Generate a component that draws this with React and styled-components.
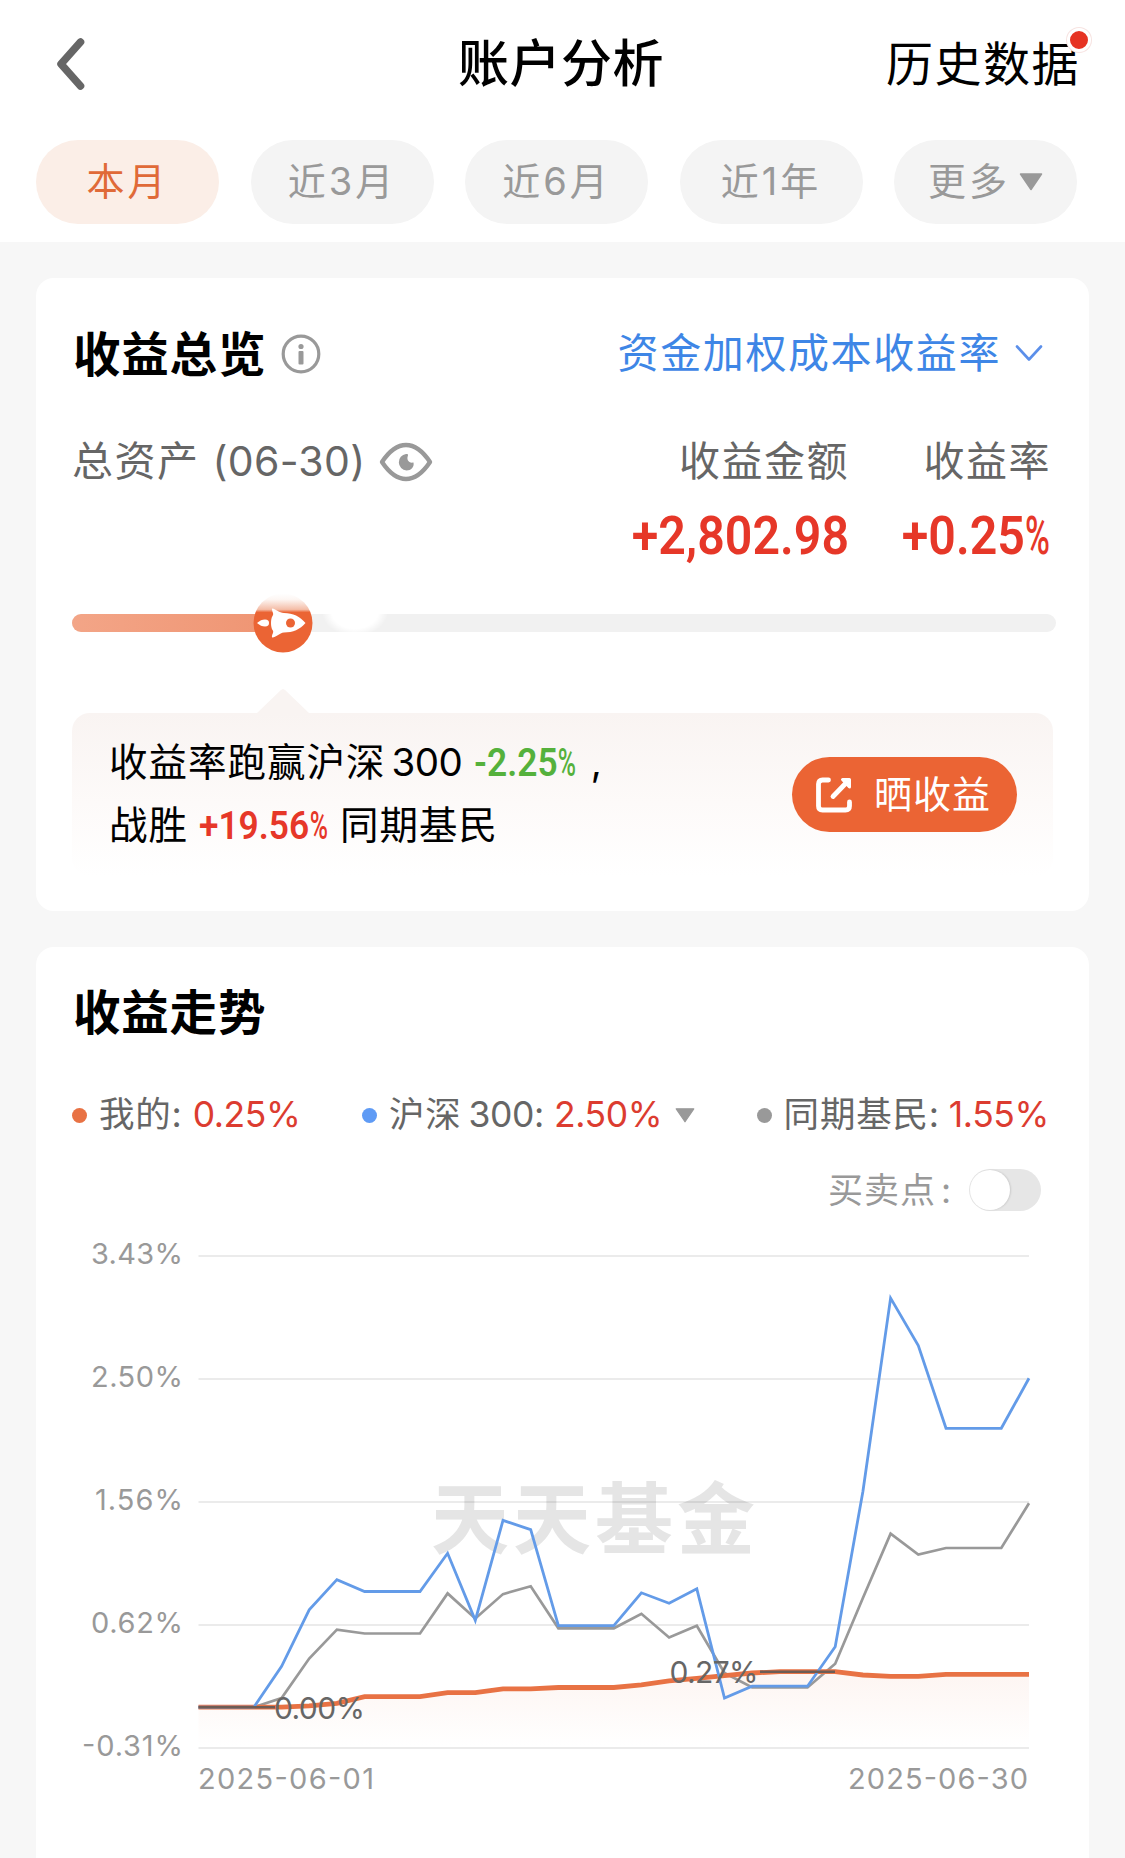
import React from 'react'
import styled, { createGlobalStyle, css } from 'styled-components';

const periods = ['本月', '近3月', '近6月', '近1年'];

const mine = [0, 0, 0, 0, 0.01, 0.03, 0.08, 0.08, 0.08, 0.11, 0.11, 0.14, 0.14, 0.15, 0.15, 0.15, 0.17, 0.2, 0.22, 0.24, 0.26, 0.27, 0.27, 0.27, 0.245, 0.235, 0.235, 0.25, 0.25, 0.25, 0.25];
const hs300 = [0, 0, 0, 0.31, 0.74, 0.97, 0.88, 0.88, 0.88, 1.17, 0.66, 1.42, 1.35, 0.62, 0.62, 0.62, 0.87, 0.79, 0.9, 0.07, 0.16, 0.16, 0.16, 0.46, 1.64, 3.11, 2.75, 2.12, 2.12, 2.12, 2.5];
const peers = [0, 0, 0, 0.07, 0.37, 0.59, 0.56, 0.56, 0.56, 0.865, 0.675, 0.86, 0.92, 0.6, 0.6, 0.6, 0.71, 0.53, 0.62, 0.26, 0.15, 0.15, 0.15, 0.33, 0.83, 1.32, 1.16, 1.21, 1.21, 1.21, 1.55];

const ticks = [
    { label: '3.43%', width: 92 },
    { label: '2.50%', width: 92 },
    { label: '1.56%', width: 88 },
    { label: '0.62%', width: 92 },
    { label: '-0.31%', width: 101 },
];

const LEFT = 126.5;
const RIGHT = 957;
const TOP = 25;
const STEP = 123;
const px = (i) => LEFT + (i * (RIGHT - LEFT)) / 30;
const py = (v) => TOP + (3.43 - v) * 131.55;
const points = (data) => data.map((v, i) => `${px(i).toFixed(1)},${py(v).toFixed(1)}`).join(' ');

const BackIcon = () => (
    <svg width="30" height="54" viewBox="0 0 30 54" fill="none">
        <path d="M24.500 5L5 27L24.500 49" stroke="#666" strokeWidth="7.600" strokeLinecap="round" strokeLinejoin="round" />
    </svg>
)

const InfoIcon = () => (
    <svg width="40" height="40" viewBox="0 0 40 40">
        <circle cx="20" cy="20" r="17.800" fill="none" stroke="#999" strokeWidth="3.200" />
        <circle cx="20" cy="12.500" r="2.600" fill="#999" />
        <rect x="17.500" y="17" width="5" height="13.500" rx="1" fill="#999" />
    </svg>
)

const EyeIcon = () => (
    <svg width="54" height="40" viewBox="0 0 54 40">
        <path d="M3 20C11 8 18 3 27 3S43 8 51 20C43 32 36 37 27 37S11 32 3 20Z" fill="none" stroke="#999" strokeWidth="4.400" strokeLinejoin="round" />
        <path d="M27 12C29 12 29.500 12.500 28.800 14C27.500 17.500 29.500 21.500 34.500 20.500C35.500 25 32 28.500 27.500 28.500A8.300 8.300 0 0 1 27 12Z" fill="#999" />
    </svg>
)

const RocketIcon = () => (
    <svg width="60" height="60" viewBox="0 0 60 60">
        <defs>
            <linearGradient id="rocketFade" x1="0" y1="0" x2="0" y2="1">
                <stop offset="0" stopColor="#fff" />
                <stop offset="0.1" stopColor="#fdf6f3" />
                <stop offset="0.27" stopColor="#f4bda7" />
                <stop offset="0.32" stopColor="#eb6434" />
                <stop offset="1" stopColor="#eb6434" />
            </linearGradient>
        </defs>
        <circle cx="30" cy="30" r="29.500" fill="url(#rocketFade)" />
        <path d="M19 15.500C23.500 16 26 20 31 20C40 20 47 23.500 52.500 30C47 36.500 40 39.500 31 39.500C26 40 24.500 44 19 44.500C18.500 41.500 21.500 39 19.500 37C17.500 34.500 17.500 25.500 19.500 23C21.500 20.500 18.500 18.500 19 15.500Z" fill="#fff" />
        <path d="M4 30C7 27.500 9 26.500 12 26.500C15 26.500 16 28 16 30S15 33.500 12 33.500C9 33.500 7 32.500 4 30Z" fill="#fff" />
        <circle cx="37.500" cy="30" r="4.500" fill="#eb6434" />
    </svg>
)

const ShareIcon = () => (
    <svg width="36" height="36" viewBox="0 0 36 36" fill="none" stroke="#fff" strokeWidth="4.800" strokeLinecap="round" strokeLinejoin="round">
        <path d="M12.500 3H6.500Q2.500 3 2.500 7V29Q2.500 33 6.500 33H29.500Q33.500 33 33.500 29V25" />
        <path d="M17 19.500L31 5" />
        <path d="M26.500 2.500H33.500V10Z" fill="#fff" strokeWidth="3" />
    </svg>
)

const Chevron = () => (
    <svg width="28" height="19" viewBox="0 0 28 19" fill="none">
        <path d="M2 1.500L14 14.500L26 1.500" stroke="#5b8fea" strokeWidth="2.600" strokeLinecap="round" strokeLinejoin="round" />
    </svg>
)

const Triangle = ({ width, height }) => (
    <svg width={width} height={height} viewBox="0 0 24 18">
        <path d="M1.500 1H22.500L12 16.500Z" fill="#999" stroke="#999" strokeWidth="1.500" strokeLinejoin="round" />
    </svg>
)

const TrendChart = () => (
    <ChartSvg width="981" height="600" viewBox="0 0 981 600">
        <defs>
            <linearGradient id="mineArea" x1="0" y1="0" x2="0" y2="1">
                <stop offset="0" stopColor="#fdf5f2" />
                <stop offset="1" stopColor="#fff" />
            </linearGradient>
        </defs>
        <Watermark x="359" y="317" textLength="324">天天基金</Watermark>
        <polygon points={`${LEFT},515 ${points(mine)} ${RIGHT},515`} fill="url(#mineArea)" />
        {ticks.map((tick, i) => (
            <g key={tick.label}>
                <line x1={LEFT} x2={RIGHT} y1={TOP + i * STEP} y2={TOP + i * STEP} stroke="#000" strokeOpacity="0.08" strokeWidth="2" />
                <AxisText x="111" y={TOP + i * STEP + 7.500} textAnchor="end" textLength={tick.width}>{tick.label}</AxisText>
            </g>
        ))}
        <AxisText x="126" y="558" textLength="176">2025-06-01</AxisText>
        <AxisText x="776" y="558" textLength="180">2025-06-30</AxisText>
        <polyline points={points(peers)} fill="none" stroke="#999" strokeWidth="2.700" />
        <polyline points={points(mine)} fill="none" stroke="#e87244" strokeWidth="4.800" />
        <polyline points={points(hs300)} fill="none" stroke="#639be8" strokeWidth="2.800" />
        <line x1={LEFT} x2="203" y1={py(0)} y2={py(0)} stroke="#6e5c54" strokeWidth="2.600" />
        <MarkText x="202" y="487.500" textLength="91">0.00%</MarkText>
        <line x1="688" x2="763" y1={py(0.27)} y2={py(0.27)} stroke="#6e5c54" strokeWidth="2.600" />
        <MarkText x="597.500" y="452" textLength="89">0.27%</MarkText>
    </ChartSvg>
)

const App = () => {
    return (
        <Page>
            <GlobalStyle />
            <Header>
                <TopBar>
                    <BackIcon />
                    <PageTitle>账户分析</PageTitle>
                    <History>历史数据<Badge /></History>
                </TopBar>
                <Tabs>
                    {periods.map((period, i) => (
                        <Tab key={period} $active={i === 0}>{period}</Tab>
                    ))}
                    <Tab>更多<Triangle width={24} height={18} /></Tab>
                </Tabs>
            </Header>

            <OverviewCard>
                <TitleRow>
                    <CardTitle>收益总览</CardTitle>
                    <InfoIcon />
                    <RateType>资金加权成本收益率<Chevron /></RateType>
                </TitleRow>
                <Labels>
                    <AssetLabel>总资产 <Digits>(06-30)</Digits><EyeIcon /></AssetLabel>
                    <span>收益金额</span>
                    <span>收益率</span>
                </Labels>
                <Values>
                    <BigDin>+2,802.98</BigDin>
                    <BigDin>+0.25<Percent>%</Percent></BigDin>
                </Values>
                <Track>
                    <Progress />
                    <Rocket><RocketIcon /></Rocket>
                    <Glow />
                </Track>
                <Panel>
                    <Arrow />
                    <Summary>
                        <div>收益率跑赢沪深<Index>300</Index><SmallDin $green>-2.25<Percent>%</Percent></SmallDin><Comma>,</Comma></div>
                        <div>战胜<Win>+19.56<Percent>%</Percent></Win>同期基民</div>
                    </Summary>
                    <ShareButton><ShareIcon />晒收益</ShareButton>
                </Panel>
            </OverviewCard>

            <TrendCard>
                <TitleRow>
                    <CardTitle>收益走势</CardTitle>
                </TitleRow>
                <Legend>
                    <LegendItem><Dot $color="#e87244" />我的:<Rate $gap={10}>0.25%</Rate></LegendItem>
                    <LegendItem><Dot $color="#5f9bf5" />沪深<Thin>300:</Thin><Rate $gap={10}>2.50%</Rate><Triangle width={20} height={15} /></LegendItem>
                    <LegendItem><Dot $color="#999" />同期基民:<Rate $gap={9}>1.55%</Rate></LegendItem>
                </Legend>
                <SwitchRow>
                    买卖点<Colon>:</Colon>
                    <Switch><Knob /></Switch>
                </SwitchRow>
                <TrendChart />
            </TrendCard>
        </Page>
    )
}

export default App

const GlobalStyle = createGlobalStyle`
    body {
        margin: 0;
        background: #f7f7f7;
    }

    svg {
        display: block;
        flex: none;
    }
`;

const Page = styled.div`
    width: 1125px;
    height: 1858px;
    overflow: hidden;
    background: #f7f7f7;
    font-family: Inter, "Noto Sans CJK SC", sans-serif;
    line-height: 1.2;
    white-space: nowrap;
    color: #000;
`;

const Header = styled.header`
    height: 242px;
    background: #fff;
`;

const TopBar = styled.div`
    display: grid;
    grid-template-columns: 1fr auto 1fr;
    align-items: center;
    height: 124px;
    padding: 3px 45px 0 45px;
    box-sizing: border-box;

    > svg {
        margin-left: 11px;
    }
`;

const PageTitle = styled.h1`
    margin: 0 3px 0 0;
    font-size: 51px;
    font-weight: 500;
    letter-spacing: 0.5px;
    line-height: 60px;
`;

const History = styled.div`
    position: relative;
    justify-self: end;
    font-size: 47px;
    letter-spacing: 1.5px;
    line-height: 60px;
`;

const Badge = styled.i`
    position: absolute;
    top: -6px;
    right: -11px;
    width: 18px;
    height: 18px;
    border: 3px solid #fff;
    border-radius: 50%;
    background: #e63323;
    box-shadow: 0 0 0 1px #f7e3e1;
`;

const Tabs = styled.div`
    display: flex;
    justify-content: space-between;
    padding: 16px 48px 0 36px;
`;

const Tab = styled.div`
    display: flex;
    align-items: center;
    justify-content: center;
    gap: 9px;
    width: 183px;
    height: 84px;
    padding-bottom: 1px;
    box-sizing: border-box;
    border-radius: 42px;
    background: ${props => props.$active ? '#fbeee7' : '#f4f4f4'};
    color: ${props => props.$active ? '#e06a38' : '#999'};
    font-size: 38px;
    letter-spacing: 3px;
`;

const Card = styled.section`
    margin: 36px 36px 0;
    padding: 0 36px;
    box-sizing: border-box;
    border-radius: 18px;
    background: #fff;
`;

const OverviewCard = styled(Card)`
    height: 633px;
    padding-top: 46px;
`;

const TrendCard = styled(Card)`
    height: 960px;
    padding-top: 35px;
`;

const TitleRow = styled.div`
    display: flex;
    align-items: center;
    height: 60px;
`;

const CardTitle = styled.h2`
    margin: 0 15px 0 1px;
    font-size: 47.5px;
    font-weight: 700;
    letter-spacing: 0.8px;
`;

const RateType = styled.div`
    display: flex;
    align-items: center;
    gap: 14px;
    margin: 0 10px 0 auto;
    color: #3e86e6;
    font-size: 41px;
    letter-spacing: 1.6px;
`;

const columns = css`
    display: grid;
    grid-template-columns: 1fr 202px;
    padding-right: 2px;
    text-align: right;
`;

const Labels = styled.div`
    ${columns}
    grid-template-columns: auto 1fr 202px;
    align-items: center;
    height: 50px;
    margin-top: 53px;
    color: #666;
    font-size: 41px;
    letter-spacing: 1.5px;
`;

const AssetLabel = styled.div`
    display: flex;
    align-items: center;
`;

const Digits = styled.span`
    margin: 0 14px 0 13px;
    letter-spacing: 0.3px;
`;

const Values = styled.div`
    ${columns}
    height: 60px;
    margin-top: 19px;
    line-height: 60px;
`;

const Din = styled.span`
    display: inline-block;
    font-family: Roboto, "Noto Sans CJK SC", sans-serif;
    font-weight: 600;
    letter-spacing: 0;
    color: ${props => props.$green ? '#55b13c' : '#e63728'};
`;

const BigDin = styled(Din)`
    font-size: 54px;
    transform: scaleX(0.895);
    transform-origin: right;
`;

const SmallDin = styled(Din)`
    margin-right: -7px;
    font-size: 38px;
    transform: scaleX(0.93);
    transform-origin: left;
`;

const Percent = styled.span`
    display: inline-block;
    width: 0.54em;
    transform: scaleX(0.7);
    transform-origin: left;
    text-align: left;
    font-weight: 500;
`;

const Track = styled.div`
    position: relative;
    width: 984px;
    height: 18px;
    margin-top: 48px;
    border-radius: 9px;
    background: #f1f1f1;
`;

const Progress = styled.div`
    width: 211px;
    height: 18px;
    border-radius: 9px 0 0 9px;
    background: linear-gradient(90deg, #f3a587, #ef9472);
`;

const Rocket = styled.div`
    position: absolute;
    left: 181px;
    top: -21px;
`;

const Glow = styled.div`
    position: absolute;
    left: 250px;
    top: -26px;
    width: 66px;
    height: 48px;
    border-radius: 50%;
    background: radial-gradient(closest-side, #fff 70%, rgba(255, 255, 255, 0));
`;

const Panel = styled.div`
    position: relative;
    display: flex;
    align-items: center;
    justify-content: space-between;
    height: 163px;
    margin-top: 81px;
    padding: 0 36px 0 37px;
    border-radius: 18px;
    background: linear-gradient(180deg, #f9f4f2, #fdfaf9 55%, #fff);
`;

const Arrow = styled.i`
    position: absolute;
    left: 185px;
    top: -24px;
    width: 52px;
    height: 24px;
    background: #f9f4f2;
    clip-path: polygon(46% 4%, 50% 0, 54% 4%, 100% 100%, 0 100%);
`;

const Summary = styled.div`
    padding-bottom: 2px;
    font-size: 38.500px;
    letter-spacing: 1px;
    line-height: 62px;
`;

const Index = styled.span`
    margin: 0 12px 0 6px;
    letter-spacing: -0.5px;
`;

const Comma = styled.span`
    margin-left: 13px;
`;

const Win = styled(SmallDin)`
    margin: 0 2px 0 11px;
`;

const ShareButton = styled.div`
    display: flex;
    align-items: center;
    gap: 22px;
    width: 225px;
    height: 75px;
    padding-left: 24px;
    box-sizing: border-box;
    border-radius: 38px;
    background: #eb6434;
    color: #fff;
    font-size: 38px;
    letter-spacing: 1px;
`;

const Legend = styled.div`
    display: flex;
    align-items: center;
    justify-content: space-between;
    height: 50px;
    margin-top: 48px;
    padding-right: 4px;
`;

const LegendItem = styled.div`
    display: flex;
    align-items: center;
    color: #666;
    font-size: 35.500px;
    letter-spacing: 0.8px;
`;

const Dot = styled.i`
    width: 15px;
    height: 15px;
    margin-right: 12px;
    border-radius: 50%;
    background: ${props => props.$color};
`;

const Thin = styled.span`
    margin-left: 7px;
    letter-spacing: -0.4px;
`;

const Rate = styled.span`
    margin: 0 13px 0 ${props => props.$gap}px;
    color: #dc3c30;
    letter-spacing: -0.4px;

    &:last-child {
        margin-right: 0;
    }
`;

const SwitchRow = styled.div`
    display: flex;
    align-items: center;
    justify-content: flex-end;
    height: 42px;
    margin-top: 29px;
    padding-right: 12px;
    color: #999;
    font-size: 35px;
    letter-spacing: 1px;
`;

const Colon = styled.span`
    margin: 0 17px 0 5px;
`;

const Switch = styled.div`
    width: 72px;
    height: 42px;
    padding: 1px;
    box-sizing: border-box;
    border-radius: 21px;
    background: #e6e6e6;
`;

const Knob = styled.div`
    width: 40px;
    height: 40px;
    border-radius: 50%;
    background: #fff;
    box-shadow: 1px 0 2px rgba(0, 0, 0, 0.12);
`;

const ChartSvg = styled.svg`
    margin-top: 20px;
`;

const AxisText = styled.text`
    fill: #999;
    font-size: 29px;
`;

const MarkText = styled.text`
    fill: #666;
    font-size: 30px;
`;

const Watermark = styled.text`
    fill: #e5e5e5;
    font-size: 78px;
    font-weight: 700;
`;
